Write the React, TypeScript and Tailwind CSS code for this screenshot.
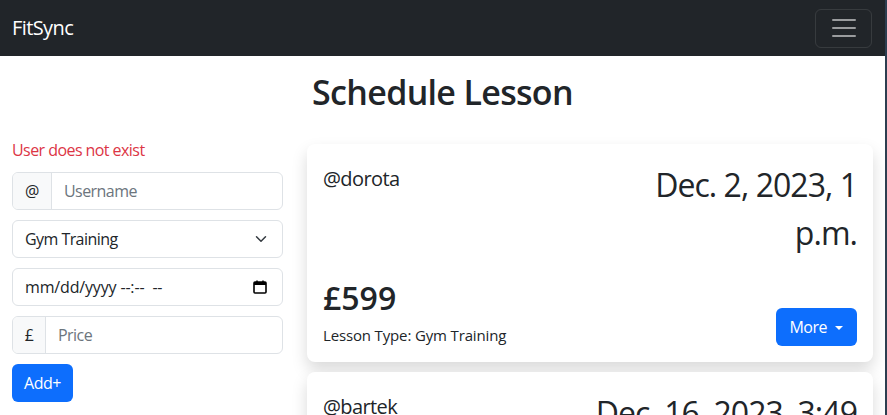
import React from 'react';

// Lessons shown in the right-hand column
const lessons = [
  { user: 'dorota', date: ['Dec. 2, 2023, 1', 'p.m.'], price: '£599', type: 'Gym Training' },
  { user: 'bartek', date: ['Dec. 16, 2023, 3:49', 'p.m.'], price: '£120', type: 'Gym Training' },
];

const inputBox = 'h-[38px] w-full rounded-md border border-[#dee2e6] bg-white text-base tracking-[-0.035em] text-[#212529]';

const Navbar: React.FC = () => (
  <nav className="flex h-14 items-center justify-between bg-[#212529] px-3">
    <span className="text-xl tracking-[-0.03em] text-white">FitSync</span>
    {/* Toggler button */}
    <button className="mr-[1px] flex h-[39px] w-[57px] items-center justify-center rounded-md border border-white/10">
      <svg width="30" height="30" viewBox="0 0 30 30">
        <path d="M4 7h22M4 15h22M4 23h22" stroke="rgba(255,255,255,0.55)" strokeWidth="2" strokeLinecap="round" />
      </svg>
    </button>
  </nav>
);

const LessonForm: React.FC = () => (
  <div className="flex w-[271px] shrink-0 flex-col">
    <p className="mb-[10px] text-base leading-6 tracking-[-0.035em] text-[#dc3545]">User does not exist</p>
    {/* Username with @ prefix */}
    <div className={`${inputBox} mb-[10px] flex overflow-hidden`}>
      <span className="flex w-[39px] items-center justify-center border-r border-[#dee2e6] bg-[#f8f9fa]">@</span>
      <span className="flex items-center pl-3 text-[#6c757d]">Username</span>
    </div>
    {/* Lesson type select */}
    <div className={`${inputBox} mb-[10px] flex items-center justify-between pl-3 pr-[15px]`}>
      <span>Gym Training</span>
      <svg width="12" height="12" viewBox="0 0 16 16">
        <path d="M2 5l6 6 6-6" fill="none" stroke="#343a40" strokeWidth="2" strokeLinecap="round" strokeLinejoin="round" />
      </svg>
    </div>
    {/* Date/time picker */}
    <div className={`${inputBox} mb-[10px] flex items-center justify-between pl-3 pr-[15px]`}>
      <span className="whitespace-pre tracking-[-0.01em]">mm/dd/yyyy --:--  --</span>
      <svg width="14" height="14" viewBox="0 0 14 14">
        <rect x="1" y="2" width="12" height="11" rx="1" fill="none" stroke="#000" strokeWidth="1.6" />
        <rect x="1" y="2" width="12" height="3" fill="#000" />
        <path d="M4 0.5v2M10 0.5v2" stroke="#000" strokeWidth="1.5" />
      </svg>
    </div>
    {/* Price with £ prefix */}
    <div className={`${inputBox} mb-[10px] flex overflow-hidden`}>
      <span className="flex w-[33px] items-center justify-center border-r border-[#dee2e6] bg-[#f8f9fa]">£</span>
      <span className="flex items-center pl-3 text-[#6c757d]">Price</span>
    </div>
    <div>
      <button className="h-[38px] rounded-md bg-[#0d6efd] px-3 text-base tracking-[-0.03em] text-white">Add+</button>
    </div>
  </div>
);

const LessonCard: React.FC<{ lesson: (typeof lessons)[number] }> = ({ lesson }) => (
  <div className="mb-[10px] flex h-[218px] flex-col rounded-lg bg-white p-4 shadow-[0_8px_16px_rgba(0,0,0,0.15)]">
    <div className="flex justify-between">
      <span className="pt-[4px] text-xl leading-[30px] tracking-[-0.03em]">@{lesson.user}</span>
      <span className="pt-[1px] text-right text-[32px] leading-[48px] tracking-[-0.03em]">
        {lesson.date[0]}
        <br />
        {lesson.date[1]}
      </span>
    </div>
    <div className="mt-auto flex items-end justify-between">
      <div>
        <div className="mb-2 text-[32px] font-semibold leading-[38px]">{lesson.price}</div>
        <div className="text-[15px] leading-[21px] tracking-[-0.01em]">Lesson Type: {lesson.type}</div>
      </div>
      <button className="flex h-[38px] items-center rounded-md bg-[#0d6efd] pl-[13px] pr-[14px] text-base tracking-[-0.03em] text-white">
        More
        <span className="ml-[8px] mt-[1px] border-x-[4px] border-t-[4px] border-x-transparent border-t-white" />
      </button>
    </div>
  </div>
);

export default function App() {
  return (
    <div className="h-[415px] overflow-hidden border-r-2 border-[#2c3e50] bg-white font-['Open_Sans',sans-serif] text-[#212529]">
      <Navbar />
      <main className="px-3">
        <h1 className="mt-[15px] text-center text-[34px] font-semibold leading-[42px] tracking-[-0.02em]">Schedule Lesson</h1>
        <div className="mt-[25px] flex gap-6">
          <LessonForm />
          <div className="flex-1 pt-[6px]">
            {lessons.map((l) => (
              <LessonCard key={l.user} lesson={l} />
            ))}
          </div>
        </div>
      </main>
    </div>
  );
}
